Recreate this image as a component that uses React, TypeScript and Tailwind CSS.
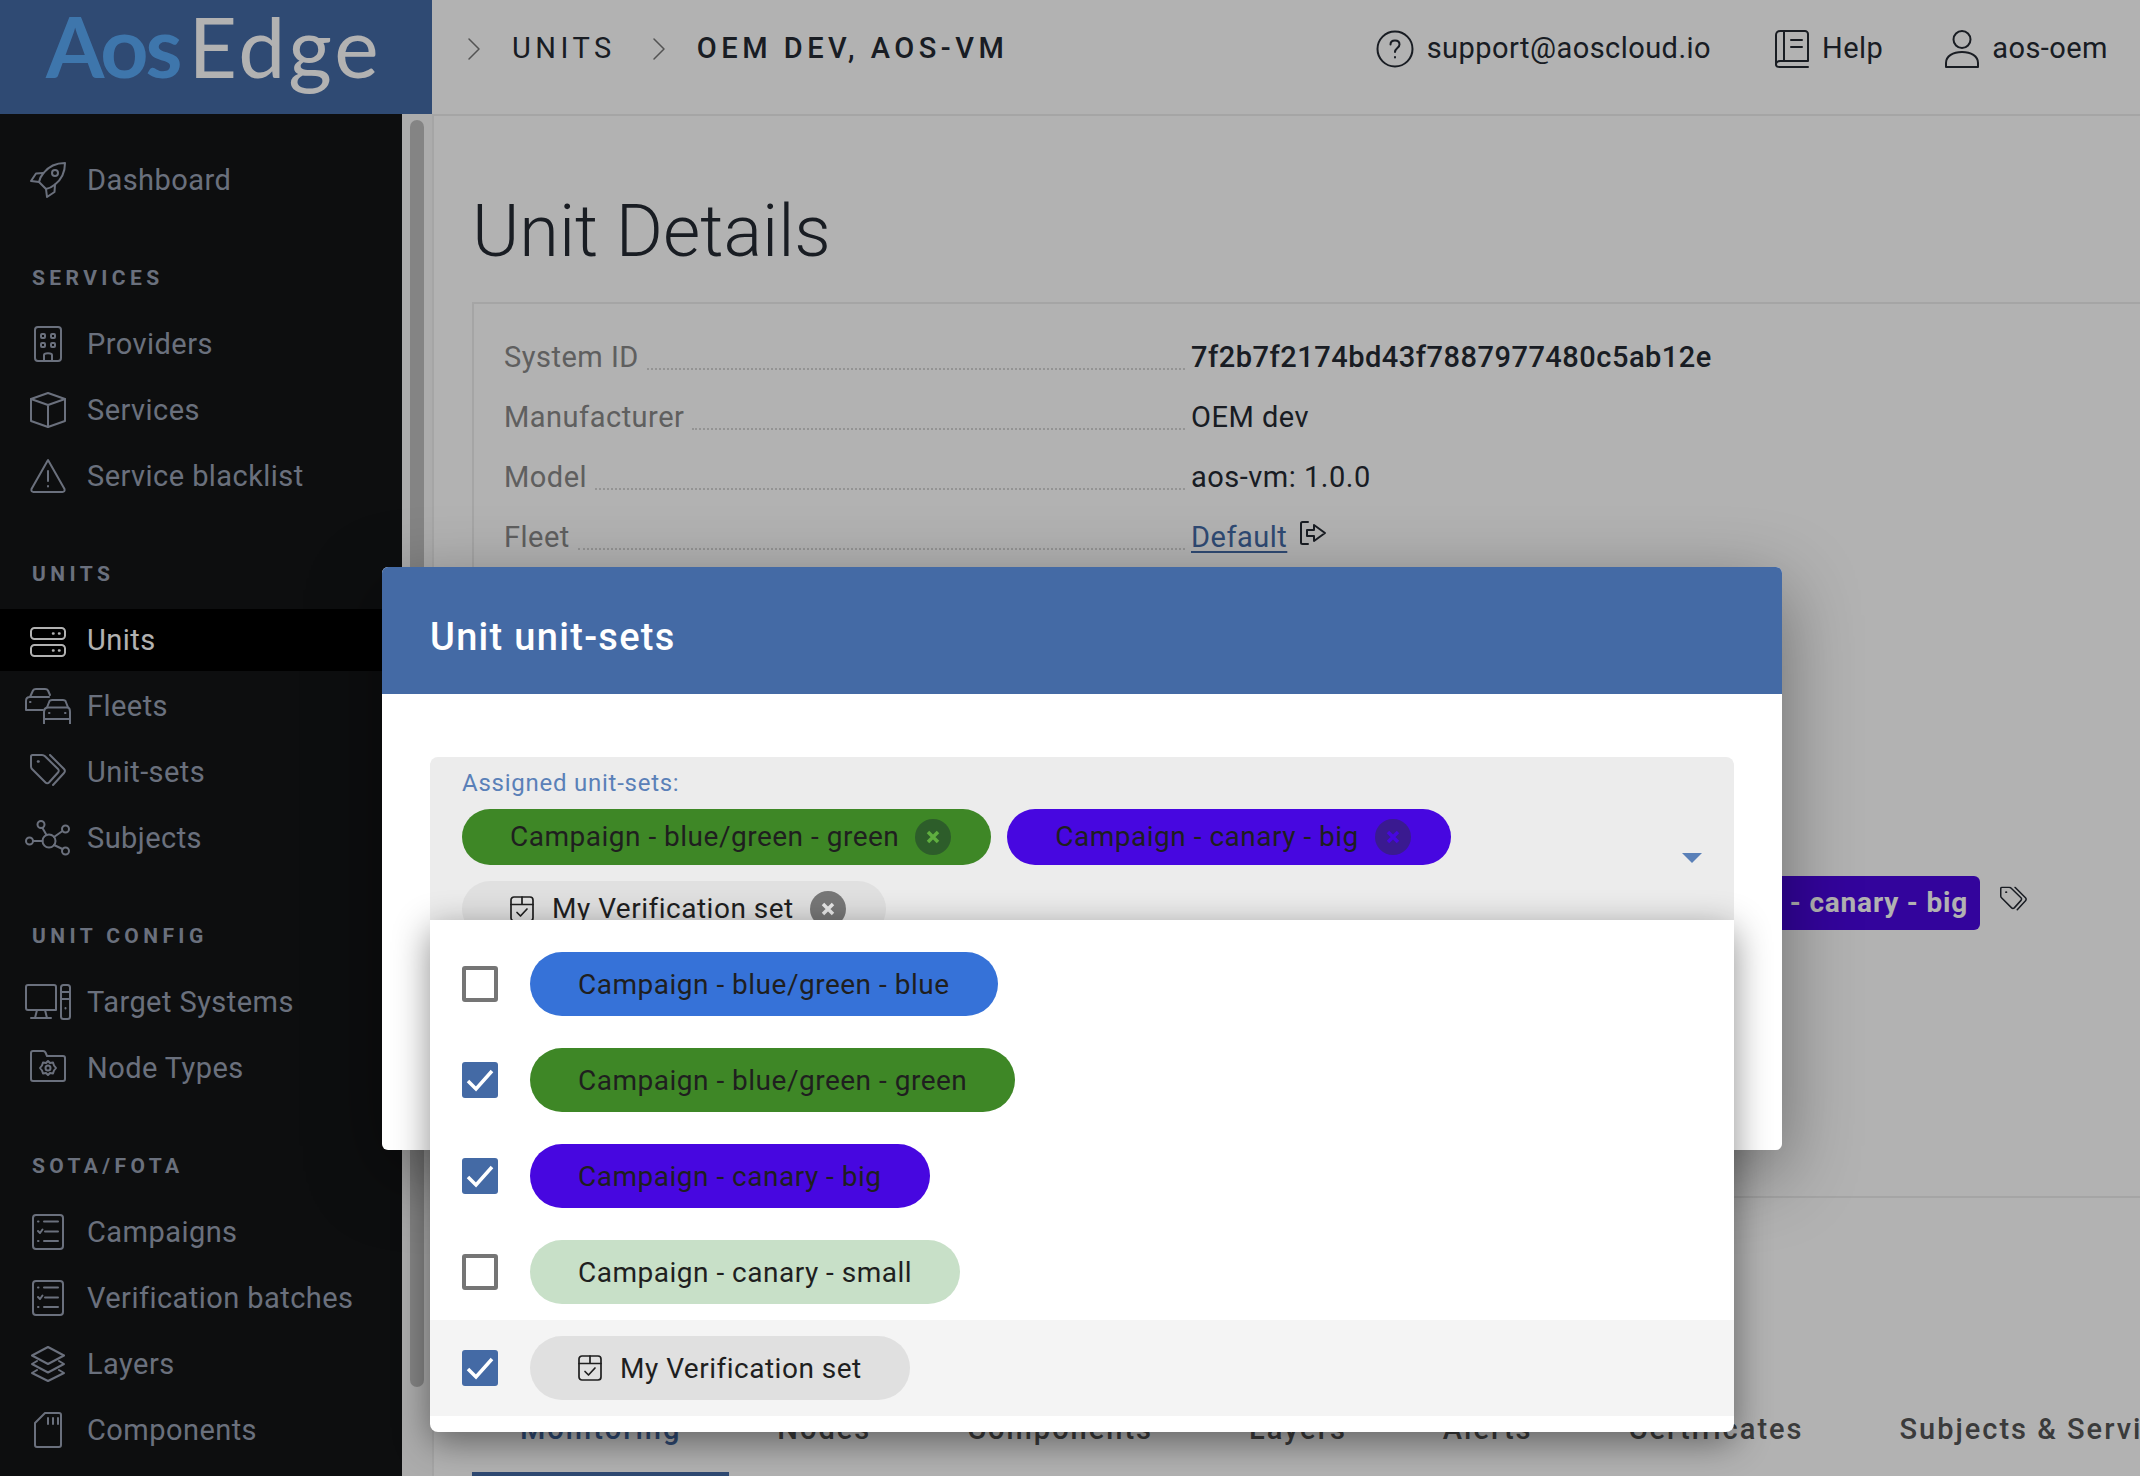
import React from "react";

const Svg = ({ w = 36, h = 36, children }: { w?: number; h?: number; children: React.ReactNode }) => (
  <svg width={w} height={h} viewBox={`0 0 ${w} ${h}`} fill="none" stroke="currentColor" strokeWidth={2} strokeLinecap="round" strokeLinejoin="round">
    {children}
  </svg>
);

const Rocket = () => (
  <Svg>
    <path d="M35 1C27 1 19 4 13.5 11C11 14 9.5 17 9 20L16 27C19 26.5 22 25 25 22.5C32 17 35 9 35 1Z" />
    <path d="M13.5 11L6 11.5L1 19L9 20" />
    <path d="M25 22.5L24.5 30L17 35L16 27" />
    <circle cx="25" cy="11" r="3" />
  </Svg>
);
const Building = () => (
  <Svg>
    <rect x="5" y="1" width="26" height="34" rx="3" />
    <rect x="11" y="8" width="4" height="4" rx="1" />
    <rect x="21" y="8" width="4" height="4" rx="1" />
    <rect x="11" y="17" width="4" height="4" rx="1" />
    <rect x="21" y="17" width="4" height="4" rx="1" />
    <path d="M14 35V29C14 26.5 22 26.5 22 29V35" />
  </Svg>
);
const Cube = () => (
  <Svg>
    <path d="M18 1L35 7V29L18 35L1 29V7Z" />
    <path d="M1 7L18 13L35 7M18 13V35" />
  </Svg>
);
const Warning = () => (
  <Svg>
    <path d="M18 2L1.500 31C1 33 2 34 3.500 34H32.500C34 34 35 33 34.500 31Z" />
    <path d="M18 13V23M18 28V28.500" />
  </Svg>
);
const Server = () => (
  <Svg>
    <rect x="1" y="6" width="34" height="11" rx="3.500" />
    <rect x="1" y="23" width="34" height="11" rx="3.500" />
    <path d="M23 11.500H23.500M29 11.500H29.500M23 28.500H23.500M29 28.500H29.500" strokeWidth={2.500} />
  </Svg>
);
const Cars = () => (
  <Svg w={46}>
    <path d="M18 22H1V13C1 10 3 9 5 9L8 2.500C8.500 1.500 9.500 1 11 1H20C21.500 1 22.500 1.500 23 2.500L25 7" />
    <path d="M5 9H24" />
    <path d="M5 14H5.500" />
    <path d="M19 36V24C19 21 20 20 22 19.500L24.500 13C25 12 26 12 27 12H38C39 12 40 12 40.500 13L43 19.500C44.500 20 45 21 45 24V36" />
    <path d="M22 19.500H43M19 31H45M24 25H24.500M40 25H40.500" />
  </Svg>
);
const Tags = () => (
  <Svg>
    <path d="M1 2.500C1 1.500 1.500 1 2.500 1H12C13 1 14 1.300 15 2.300L28 15C29 16 29 17.500 28 18.500L19 28.500C18 29.500 16.500 29.500 15.500 28.500L2 15C1.300 14.300 1 13.500 1 12.500Z" />
    <path d="M20 1L34 15C35.200 16.300 35.200 17.500 34 19L23 31" />
    <path d="M8 7.500H8.500" strokeWidth={2.500} />
  </Svg>
);
const Hub = () => (
  <Svg w={46}>
    <circle cx="24" cy="21" r="6.500" />
    <circle cx="16" cy="4.500" r="3.500" />
    <circle cx="40.500" cy="9" r="3.500" />
    <circle cx="40.500" cy="31" r="3.500" />
    <circle cx="4.500" cy="21" r="3.500" />
    <path d="M17.500 8L21.500 15M37.500 11L29 17M37.500 29L29 25M8 21H17.500" />
  </Svg>
);
const Devices = () => (
  <Svg w={46}>
    <path d="M30 26H3C2 26 1 25 1 24V3C1 2 2 1 3 1H29C30 1 31 2 31 3V26" />
    <path d="M12 26L10 34M20 26L22 34M6 34H26" />
    <rect x="36" y="1" width="9" height="34" rx="2.500" />
    <path d="M36 8H45M36 15H45M40.500 24V24.500" />
  </Svg>
);
const FolderGear = () => (
  <Svg>
    <path d="M1 3C1 2 2 1 3 1H13C14 1 15 1.500 15.500 2.500L17 6H33C34 6 35 7 35 8V29C35 30 34 31 33 31H3C2 31 1 30 1 29Z" />
    <path d="M18 11L20 13L23 12.500L24 15.500L26 18L24 20.500L23 23.500L20 23L18 25L16 23L13 23.500L12 20.500L10 18L12 15.500L13 12.500L16 13Z" />
    <circle cx="18" cy="18" r="2.500" />
  </Svg>
);
const Checklist = () => (
  <Svg>
    <rect x="3" y="1" width="30" height="34" rx="3" />
    <path d="M8 7.500H8.500M14 7.500H28M8 17L10 19L12.500 15.500M15 17.500H28M8 27H8.500M14 27H28" />
  </Svg>
);
const Layers = () => (
  <Svg>
    <path d="M18 1L34 9.500L18 18L2 9.500Z" />
    <path d="M7 15L2 18L18 26.500L34 18L29 15" />
    <path d="M7 24L2 27L18 35L34 27L29 24" />
  </Svg>
);
const SdCard = () => (
  <Svg>
    <path d="M15 1H29C30 1 31 2 31 3V33C31 34 30 35 29 35H7C6 35 5 34 5 33V11Z" />
    <path d="M18 6V12M23 6V12M28 6V12" />
  </Svg>
);
const Question = () => (
  <svg width="38" height="38" viewBox="0 0 38 38" fill="none" stroke="currentColor" strokeWidth={2} strokeLinecap="round">
    <circle cx="19" cy="19" r="17.500" />
    <path d="M14.500 14.500C14.500 12 16.500 10.500 19 10.500C21.500 10.500 23.500 12 23.500 14.500C23.500 18 19 18 19 22M19 27V27.500" />
  </svg>
);
const Book = () => (
  <svg width="34" height="38" viewBox="0 0 34 38" fill="none" stroke="currentColor" strokeWidth={2} strokeLinecap="round" strokeLinejoin="round">
    <path d="M9 1H30C31.500 1 33 2.500 33 4V31H5C2.500 31 1 33 1 34.500C1 36 2.500 37 5 37H33" />
    <path d="M1 34.500V5C1 2.500 3 1 5 1H9V31" />
    <path d="M16 10H27M16 17H27" />
  </svg>
);
const User = () => (
  <svg width="34" height="38" viewBox="0 0 34 38" fill="none" stroke="currentColor" strokeWidth={2} strokeLinejoin="round">
    <circle cx="17" cy="9.500" r="8.500" />
    <path d="M1 37V33C1 26 8 22 17 22C26 22 33 26 33 33V37Z" />
  </svg>
);
const Chevron = () => (
  <svg width="14" height="24" viewBox="0 0 14 24" fill="none" stroke="currentColor" strokeWidth={1.500} strokeLinecap="round" strokeLinejoin="round">
    <path d="M2 2L12 12L2 22" />
  </svg>
);
const BoxCheck = () => (
  <svg width="24" height="26" viewBox="0 0 24 26" fill="none" stroke="currentColor" strokeWidth={1.700} strokeLinecap="round" strokeLinejoin="round" className="shrink-0">
    <rect x="1" y="1" width="22" height="24" rx="3" />
    <path d="M1 8.500H23M12 1V8.500M7 16.500L10.500 20L17 13" />
  </svg>
);
const LinkOut = () => (
  <svg width="28" height="26" viewBox="0 0 28 26" fill="none" stroke="currentColor" strokeWidth={2} strokeLinecap="round" strokeLinejoin="round">
    <path d="M8 1H2.500C1.500 1 1 1.500 1 2.500V21.500C1 22.500 1.500 23 2.500 23H8" />
    <path d="M7 9H14V4L25 12L14 20V15H7Z" />
  </svg>
);

type NavItem = { label: string; icon: React.ReactNode; active?: boolean };
type NavSection = { title?: string; items: NavItem[] };

const nav: NavSection[] = [
  { items: [{ label: "Dashboard", icon: <Rocket /> }] },
  {
    title: "Services",
    items: [
      { label: "Providers", icon: <Building /> },
      { label: "Services", icon: <Cube /> },
      { label: "Service blacklist", icon: <Warning /> },
    ],
  },
  {
    title: "Units",
    items: [
      { label: "Units", icon: <Server />, active: true },
      { label: "Fleets", icon: <Cars /> },
      { label: "Unit-sets", icon: <Tags /> },
      { label: "Subjects", icon: <Hub /> },
    ],
  },
  {
    title: "Unit config",
    items: [
      { label: "Target Systems", icon: <Devices /> },
      { label: "Node Types", icon: <FolderGear /> },
    ],
  },
  {
    title: "SOTA/FOTA",
    items: [
      { label: "Campaigns", icon: <Checklist /> },
      { label: "Verification batches", icon: <Checklist /> },
      { label: "Layers", icon: <Layers /> },
      { label: "Components", icon: <SdCard /> },
    ],
  },
];

const Sidebar = () => (
  <aside className="flex w-[432px] shrink-0">
    <div className="w-[402px] bg-[#141516] pt-[33px] flex flex-col gap-8">
      {nav.map((section, i) => (
        <div key={i}>
          {section.title && (
            <div className="h-[66px] flex items-center pl-8 pt-[2px] text-[21px] font-bold uppercase tracking-[4.4px] text-[#99a1b3]">
              {section.title}
            </div>
          )}
          {section.items.map((item) => (
            <div key={item.label} className="h-[66px] flex items-center">
              <div className={`h-[62px] w-full flex items-center ${item.active ? "bg-black text-white" : "text-[#99a1b3]"}`}>
                <div className="w-[87px] shrink-0 flex justify-center pl-[9px]">{item.icon}</div>
                <span className="text-[29px] tracking-[0.45px] mt-[2px]">{item.label}</span>
              </div>
            </div>
          ))}
        </div>
      ))}
    </div>
    <div className="w-[30px] bg-[#f6f6f6] px-2 pt-[6px] pb-[89px] flex">
      <div className="w-4 rounded-full bg-[#bebebe]" />
    </div>
  </aside>
);

const Header = () => (
  <header className="flex h-[114px] shrink-0">
    <div className="w-[432px] shrink-0 bg-[#446aa5] flex items-start pl-[46px] font-['Lato',sans-serif] text-[84px] leading-[92px]">
      <span className="font-bold text-[#5aaaf7] tracking-[-3px]">Aos</span>
      <span className="font-normal text-white ml-[9px] tracking-[3px]">Edge</span>
    </div>
    <div className="flex-1 flex items-center pb-[16px] text-[#252a33]">
      <div className="ml-[35px] text-[#777]"><Chevron /></div>
      <span className="ml-[31px] text-[29px] tracking-[4.5px]">UNITS</span>
      <div className="ml-[36px] text-[#777]"><Chevron /></div>
      <span className="ml-[31px] text-[29px] font-medium tracking-[4.5px]">OEM DEV, AOS-VM</span>
      <div className="ml-auto flex items-center pr-[32px] text-[29px] tracking-[0.45px]">
        <Question />
        <span className="ml-[13px]">support@aoscloud.io</span>
        <div className="ml-[64px]"><Book /></div>
        <span className="ml-[13px]">Help</span>
        <div className="ml-[62px]"><User /></div>
        <span className="ml-[13px]">aos-oem</span>
      </div>
    </div>
  </header>
);

const InfoRow = ({ label, children }: { label: string; children: React.ReactNode }) => (
  <div className="h-[60px] flex items-center text-[29px] tracking-[0.5px]">
    <div className="w-[681px] flex items-baseline">
      <span className="text-[#888]">{label}</span>
      <div className="flex-1 ml-2 translate-y-[3px] border-b-2 border-dotted border-[#d4d4d4]" />
    </div>
    <div className="ml-[6px] flex items-center">{children}</div>
  </div>
);

const tabs = ["Monitoring", "Nodes", "Components", "Layers", "Alerts", "Certificates", "Subjects & Services"];

const Main = () => (
  <main className="flex-1 min-w-0 border-l-2 border-t-2 border-[#ececec] pl-[38px] overflow-hidden">
    <h1 className="h-[186px] flex items-center text-[72px] font-light text-[#252a33] pt-[46px]">Unit Details</h1>
    <section className="w-[1700px] h-[896px] border-2 border-[#ececec] pl-[30px] pt-[24px] text-[#252a33]">
      <InfoRow label="System ID"><span className="font-medium">7f2b7f2174bd43f7887977480c5ab12e</span></InfoRow>
      <InfoRow label="Manufacturer">OEM dev</InfoRow>
      <InfoRow label="Model">aos-vm: 1.0.0</InfoRow>
      <InfoRow label="Fleet">
        <span className="text-[#446aa5] underline underline-offset-4">Default</span>
        <span className="ml-[13px] -mt-[8px]"><LinkOut /></span>
      </InfoRow>
      <div className="h-[305px]" />
      <div className="h-[60px] ml-[688px] flex items-center">
        <div className="w-[788px] flex justify-end">
          <span className="h-[54px] px-3 flex items-center rounded-md bg-[#4a07e0] text-white text-[28px] font-bold tracking-[0.8px] whitespace-nowrap">Campaign - canary - big</span>
        </div>
        <div className="ml-5 -mt-[6px] scale-75 origin-left"><Tags /></div>
      </div>
    </section>
    <nav className="mt-[186px] flex h-[92px] text-[29px] font-medium tracking-[2px] text-[#555]">
      {tabs.map((t, i) => (
        <div key={t} className={`px-12 pt-[4px] flex items-center whitespace-nowrap border-b-4 ${i === 0 ? "border-[#446aa5] text-[#446aa5]" : "border-transparent"}`}>
          {t}
        </div>
      ))}
    </nav>
  </main>
);

const Check = () => (
  <svg width="36" height="36" viewBox="0 0 36 36" fill="none" stroke="white" strokeWidth={3.500}>
    <path d="M6 19L14 27L30 9" />
  </svg>
);

const SelectedChip = ({ label, bg, closeBg, x, icon }: { label: string; bg: string; closeBg: string; x: string; icon?: boolean }) => (
  <div className={`h-14 rounded-full pl-12 pr-[40px] flex items-center text-[28px] tracking-[0.5px] text-[#1f1f1f] ${bg}`}>
    {icon && <span className="mr-[18px]"><BoxCheck /></span>}
    <span className="whitespace-nowrap">{label}</span>
    <span className={`ml-4 w-9 h-9 rounded-full flex items-center justify-center ${closeBg}`}>
      <svg width="14" height="14" viewBox="0 0 14 14" fill="none" stroke={x} strokeWidth={3.500}>
        <path d="M2 2L12 12M12 2L2 12" />
      </svg>
    </span>
  </div>
);

const options = [
  { label: "Campaign - blue/green - blue", bg: "bg-[#3672d8]", checked: false },
  { label: "Campaign - blue/green - green", bg: "bg-[#3e8726]", checked: true },
  { label: "Campaign - canary - big", bg: "bg-[#4707e0]", checked: true },
  { label: "Campaign - canary - small", bg: "bg-[#c8e0c8]", checked: false },
  { label: "My Verification set", bg: "bg-[#e0e0e0]", checked: true, icon: true, hover: true },
];

const Dropdown = () => (
  <div className="absolute left-0 right-0 top-[163px] z-10 rounded-b-lg bg-white py-4 shadow-[0_10px_36px_rgba(0,0,0,0.45)]">
    {options.map((o) => (
      <div key={o.label} className={`h-24 flex items-center pl-8 ${o.hover ? "bg-[#f4f4f4]" : ""}`}>
        {o.checked ? (
          <div className="w-9 h-9 rounded-[3px] bg-[#446aa5]"><Check /></div>
        ) : (
          <div className="w-9 h-9 rounded-[3px] border-4 border-[#757575]" />
        )}
        <div className={`ml-8 h-16 rounded-full px-12 flex items-center text-[28px] tracking-[0.5px] text-[#1f1f1f] ${o.bg}`}>
          {o.icon && <span className="mr-[18px]"><BoxCheck /></span>}
          <span className="whitespace-nowrap pt-[1px]">{o.label}</span>
        </div>
      </div>
    ))}
  </div>
);

const Dialog = () => (
  <div className="absolute left-[382px] top-[567px] w-[1400px] h-[583px] rounded-md bg-white shadow-[0_22px_76px_rgba(0,0,0,0.4)]">
    <div className="h-[127px] rounded-t-md bg-[#446aa5] px-12 pt-[14px] flex items-center text-white text-[38px] font-medium tracking-[1.3px]">
      Unit unit-sets
    </div>
    <div className="px-12 pt-[63px]">
      <div className="relative h-[220px] rounded-t-lg bg-[#ececec] pl-8 pt-[14px]">
        <div className="text-[24px] leading-[24px] tracking-[0.75px] text-[#5a80b8]">Assigned unit-sets:</div>
        <div className="mt-[14px] w-[1180px] flex flex-wrap gap-x-4 gap-y-4">
          <SelectedChip label="Campaign - blue/green - green" bg="bg-[#3e8726]" closeBg="bg-[#2d5d2a]" x="#5fae3f" />
          <SelectedChip label="Campaign - canary - big" bg="bg-[#4707e0]" closeBg="bg-[#3a1a90]" x="#4707e0" />
          <SelectedChip label="My Verification set" bg="bg-[#e0e0e0]" closeBg="bg-[#777]" x="#e8e8e8" icon />
        </div>
        <div className="absolute right-8 top-24 w-0 h-0 border-l-[10px] border-r-[10px] border-t-[10px] border-l-transparent border-r-transparent border-t-[#5a80b8]" />
        <Dropdown />
      </div>
    </div>
  </div>
);

export default function App() {
  return (
    <div className="relative w-[2140px] h-[1476px] overflow-hidden bg-white font-['Roboto',sans-serif]">
      <Header />
      <div className="flex h-[1362px]">
        <Sidebar />
        <Main />
      </div>
      <div className="absolute inset-0 bg-black/30" />
      <Dialog />
    </div>
  );
}
